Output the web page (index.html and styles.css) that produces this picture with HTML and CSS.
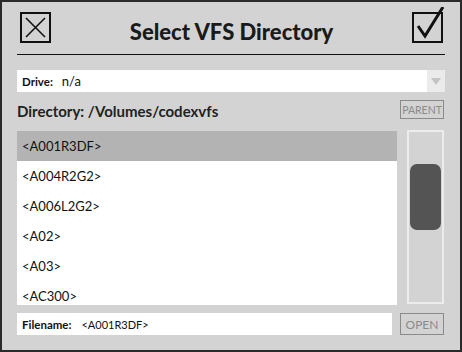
FILE: index.html
```html
<!DOCTYPE html>
<html lang="en">
<head>
    <meta charset="UTF-8">
    <title>Select VFS Directory</title>
    <link rel="stylesheet" href="styles.css">
</head>
<body>
    <div class="ventana">
        <div class="cabecera">
            <div class="icono-caja">
                <svg width="27" height="27" viewBox="0 0 27 27">
                    <path d="M4 4 L23 23 M23 4 L4 23" stroke="#111" stroke-width="1.6" fill="none"/>
                </svg>
            </div>
            <h1>Select VFS Directory</h1>
            <div class="icono-caja check">
                <svg width="36" height="36" viewBox="0 0 36 36">
                    <path d="M8 19 L15 29 L33 0" stroke="#111" stroke-width="3" fill="none" stroke-linejoin="miter"/>
                </svg>
            </div>
        </div>

        <div class="drive">
            <span class="etiqueta">Drive:</span>
            <span class="valor">n/a</span>
            <div class="flecha"><span></span></div>
        </div>

        <div class="directorio">
            <span>Directory: /Volumes/codexvfs</span>
            <button class="boton">PARENT</button>
        </div>

        <div class="zona-lista">
            <ul class="lista">
                <li class="seleccionado">&lt;A001R3DF&gt;</li>
                <li>&lt;A004R2G2&gt;</li>
                <li>&lt;A006L2G2&gt;</li>
                <li>&lt;A02&gt;</li>
                <li>&lt;A03&gt;</li>
                <li>&lt;AC300&gt;</li>
            </ul>
            <div class="scroll">
                <div class="thumb"></div>
            </div>
        </div>

        <div class="fichero">
            <div class="campo">
                <span class="etiqueta">Filename:</span>
                <span class="nombre">&lt;A001R3DF&gt;</span>
            </div>
            <button class="boton">OPEN</button>
        </div>
    </div>
</body>
</html>
```

FILE: styles.css
```css
* {
    margin: 0;
    padding: 0;
    box-sizing: border-box;
}
body {
    background-color: #d3d3d3;
    font-family: 'Lato', 'Open Sans', sans-serif;
    color: #111;
}
.ventana {
    width: 462px;
    height: 352px;
    border: 2px solid #2a2a2a;
    padding: 0 15px;
    background-color: #d3d3d3;
}
.cabecera {
    display: flex;
    align-items: center;
    justify-content: space-between;
    padding: 10px 2px 11px 3px;
    border-bottom: 1px solid #111;
}
.icono-caja {
    width: 31px;
    height: 31px;
    border: 2px solid #111;
    display: flex;
    align-items: center;
    justify-content: center;
}
.icono-caja.check {
    position: relative;
}
.icono-caja.check svg {
    position: absolute;
    left: -4px;
    top: -7px;
}
h1 {
    height: 31px;
    padding-top: 8px;
    line-height: 23px;
    font-size: 22px;
    font-weight: 900;
    color: #1a1a1a;
}
.drive {
    margin-top: 15px;
    height: 22px;
    background: #fff;
    display: flex;
    align-items: center;
    padding-left: 5px;
}
.etiqueta {
    font-size: 11.5px;
    font-weight: 700;
}
.drive .valor {
    font-size: 13px;
    margin-left: 9px;
    flex: 1;
}
.flecha {
    width: 18px;
    height: 22px;
    background: #ebebeb;
    display: flex;
    align-items: center;
    justify-content: center;
}
.flecha span {
    width: 0;
    height: 0;
    border-left: 5px solid transparent;
    border-right: 5px solid transparent;
    border-top: 7px solid #c4c4c4;
}
.directorio {
    margin-top: 8px;
    height: 19px;
    display: flex;
    align-items: flex-end;
    justify-content: space-between;
    font-size: 15px;
    font-weight: 700;
    color: #222;
}
.directorio span {
    line-height: 15px;
}
.boton {
    width: 44px;
    height: 19px;
    border: 1px solid #8a8a8a;
    background: transparent;
    color: #8a8a8a;
    font-family: 'Lato', sans-serif;
    font-size: 10.5px;
    margin-right: 1px;
}
.zona-lista {
    margin-top: 12px;
    display: flex;
    justify-content: space-between;
    align-items: flex-start;
}
.lista {
    list-style: none;
    width: 380px;
    height: 174px;
    background: #fff;
    overflow: hidden;
}
.lista li {
    height: 30px;
    line-height: 30px;
    padding-left: 5px;
    font-size: 13px;
    color: #111;
}
.lista li.seleccionado {
    background: #b3b3b3;
}
.scroll {
    width: 37px;
    height: 174px;
    margin-top: -1px;
    margin-right: 1px;
    border: 2px solid #ececec;
    padding: 32px 1px 0;
}
.thumb {
    height: 66px;
    background: #545454;
    border-radius: 7px;
}
.fichero {
    margin-top: 8px;
    display: flex;
    justify-content: space-between;
    align-items: center;
}
.campo {
    width: 375px;
    height: 22px;
    background: #fff;
    display: flex;
    align-items: center;
    padding-left: 5px;
}
.campo .nombre {
    font-size: 11px;
    margin-left: 10px;
}
.fichero .boton {
    height: 22px;
    font-size: 12px;
}
```
